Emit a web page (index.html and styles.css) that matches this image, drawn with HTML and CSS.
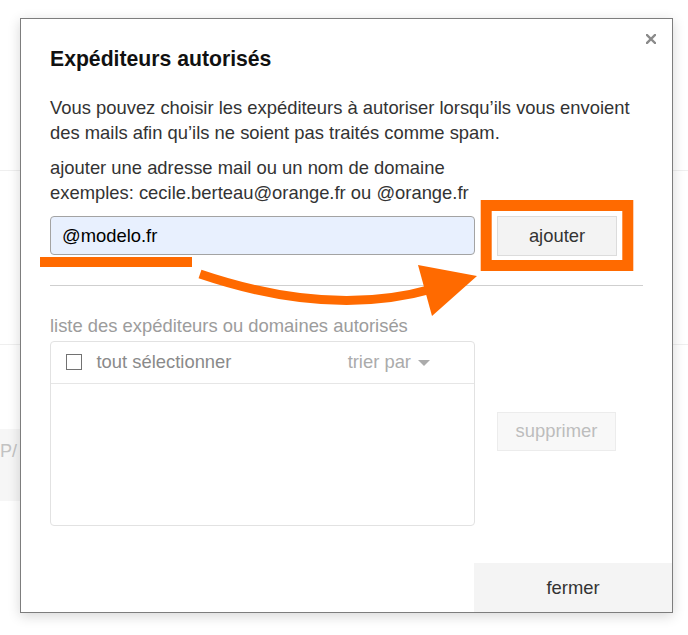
FILE: index.html
```html
<!DOCTYPE html>
<html lang="fr">
<head>
<meta charset="utf-8">
<title>Expéditeurs autorisés</title>
<link rel="stylesheet" href="styles.css">
</head>
<body>
<div class="page">
  <div class="pg-row pg-row-1"></div>
  <div class="pg-row pg-row-2"></div>
  <div class="pg-spacer"></div>
  <div class="pg-block"><span>P/</span></div>
</div>

<div class="dialog" role="dialog">
  <button class="close" aria-label="fermer">
    <svg width="10" height="10" viewBox="0 0 10 10"><path d="M1 1L9 9M9 1L1 9" stroke="#8a8a8a" stroke-width="2.4" stroke-linecap="square"/></svg>
  </button>
  <div class="content">
    <h2 class="title">Expéditeurs autorisés</h2>
    <p class="desc">Vous pouvez choisir les expéditeurs à autoriser lorsqu’ils vous envoient des mails afin qu’ils ne soient pas traités comme spam.</p>
    <p class="hint">ajouter une adresse mail ou un nom de domaine<br>exemples: cecile.berteau@orange.fr ou @orange.fr</p>
    <div class="add-row">
      <div class="input">@modelo.fr</div>
      <button class="btn btn-add">ajouter</button>
    </div>
    <div class="divider"></div>
    <div class="list-label">liste des expéditeurs ou domaines autorisés</div>
    <div class="list-row">
      <div class="list-box">
        <div class="list-head">
          <span class="checkbox"></span>
          <span class="sel-all">tout sélectionner</span>
          <span class="sort">trier par<span class="caret"></span></span>
        </div>
      </div>
      <div class="side">
        <button class="btn btn-del">supprimer</button>
      </div>
    </div>
  </div>
  <div class="footer">
    <button class="btn btn-close">fermer</button>
  </div>
</div>

<svg class="annot" width="688" height="635" viewBox="0 0 688 635">
  <rect x="40" y="257" width="152" height="10" fill="#ff6a00"/>
  <rect x="486.2" y="205.5" width="141.6" height="60" fill="none" stroke="#ff6a00" stroke-width="11"/>
  <path d="M200 274 Q 330 318 432 289" fill="none" stroke="#ff6a00" stroke-width="9"/>
  <polygon points="418,265 477,276 432,316" fill="#ff6a00"/>
</svg>
</body>
</html>
```
FILE: styles.css
```css
html, body {
  margin: 0;
  padding: 0;
}
body {
  width: 688px;
  height: 635px;
  overflow: hidden;
  background: #ffffff;
  font-family: "Liberation Sans", Arial, sans-serif;
  position: relative;
}

/* background page */
.page {
  display: flex;
  flex-direction: column;
}
.pg-row {
  border-bottom: 1px solid #efefef;
}
.pg-row-1 { height: 170px; }
.pg-row-2 { height: 173px; }
.pg-spacer { height: 84px; }
.pg-block {
  height: 72px;
  width: 60px;
  background: #f6f6f6;
  box-sizing: border-box;
  padding-top: 10px;
  font-size: 18px;
  line-height: 24px;
  color: #c2c2c2;
  overflow: hidden;
}

/* dialog */
.dialog {
  position: absolute;
  left: 20px;
  top: 18px;
  width: 653px;
  height: 595px;
  box-sizing: border-box;
  border: 1px solid #7d7d7d;
  background: #fff;
  box-shadow: 0 3px 12px rgba(0, 0, 0, 0.16);
  display: flex;
  flex-direction: column;
}
.close {
  position: absolute;
  top: 15px;
  right: 16px;
  width: 10px;
  height: 10px;
  padding: 0;
  border: 0;
  background: none;
  display: block;
}
.close svg { display: block; }

.content {
  padding: 27.8px 29px 0 29px;
}
.title {
  margin: 0;
  font-size: 21.2px;
  line-height: 24px;
  font-weight: bold;
  color: #111;
}
.desc, .hint {
  margin: 0;
  font-size: 18.4px;
  line-height: 25.5px;
  color: #333;
}
.desc { margin-top: 24.1px; }
.hint { margin-top: 9px; }

.add-row {
  margin-top: 10px;
  display: flex;
  align-items: center;
  gap: 22px;
}
.input {
  width: 425px;
  height: 39px;
  box-sizing: border-box;
  border: 1px solid #a3a3a3;
  border-radius: 4px;
  background: #e8f0fe;
  padding-left: 11px;
  font-size: 18.4px;
  line-height: 37px;
  color: #000;
}
.btn {
  font-family: "Liberation Sans", Arial, sans-serif;
  font-size: 18.4px;
  padding: 0;
  box-sizing: border-box;
  border-radius: 0;
}
.btn-add {
  width: 120px;
  height: 40px;
  background: #f3f3f3;
  border: 1px solid #dcdcdc;
  color: #333;
}

.divider {
  margin-top: 29px;
  height: 1px;
  background: #cfcfcf;
}
.list-label {
  margin-top: 27.2px;
  font-size: 18.4px;
  line-height: 25.5px;
  color: #9c9c9c;
}
.list-row {
  margin-top: 2px;
  display: flex;
  gap: 22px;
}
.list-box {
  width: 425px;
  height: 185px;
  box-sizing: border-box;
  border: 1px solid #e2e2e2;
  border-radius: 4px;
}
.list-head {
  height: 42px;
  box-sizing: border-box;
  border-bottom: 1px solid #e6e6e6;
  display: flex;
  align-items: center;
  padding: 0 44px 0 15px;
  font-size: 18.4px;
  line-height: 25.5px;
}
.checkbox {
  width: 16px;
  height: 16px;
  box-sizing: border-box;
  border: 1.5px solid #727272;
  margin-right: 14.5px;
}
.sel-all { color: #8a8a8a; }
.sort {
  margin-left: auto;
  color: #ababab;
  display: flex;
  align-items: center;
}
.caret {
  margin-left: 7px;
  width: 0;
  height: 0;
  border-left: 6.5px solid transparent;
  border-right: 6.5px solid transparent;
  border-top: 6px solid #ababab;
  margin-top: 1px;
}
.side {
  padding-top: 71px;
}
.btn-del {
  width: 119px;
  height: 39px;
  background: #f8f8f8;
  border: 1px solid #ececec;
  color: #bdbdbd;
}

.footer {
  margin-top: auto;
  display: flex;
  justify-content: flex-end;
}
.btn-close {
  width: 198px;
  height: 49px;
  background: #f4f4f4;
  border: 0;
  color: #333;
}

.annot {
  position: absolute;
  left: 0;
  top: 0;
  pointer-events: none;
}
```
